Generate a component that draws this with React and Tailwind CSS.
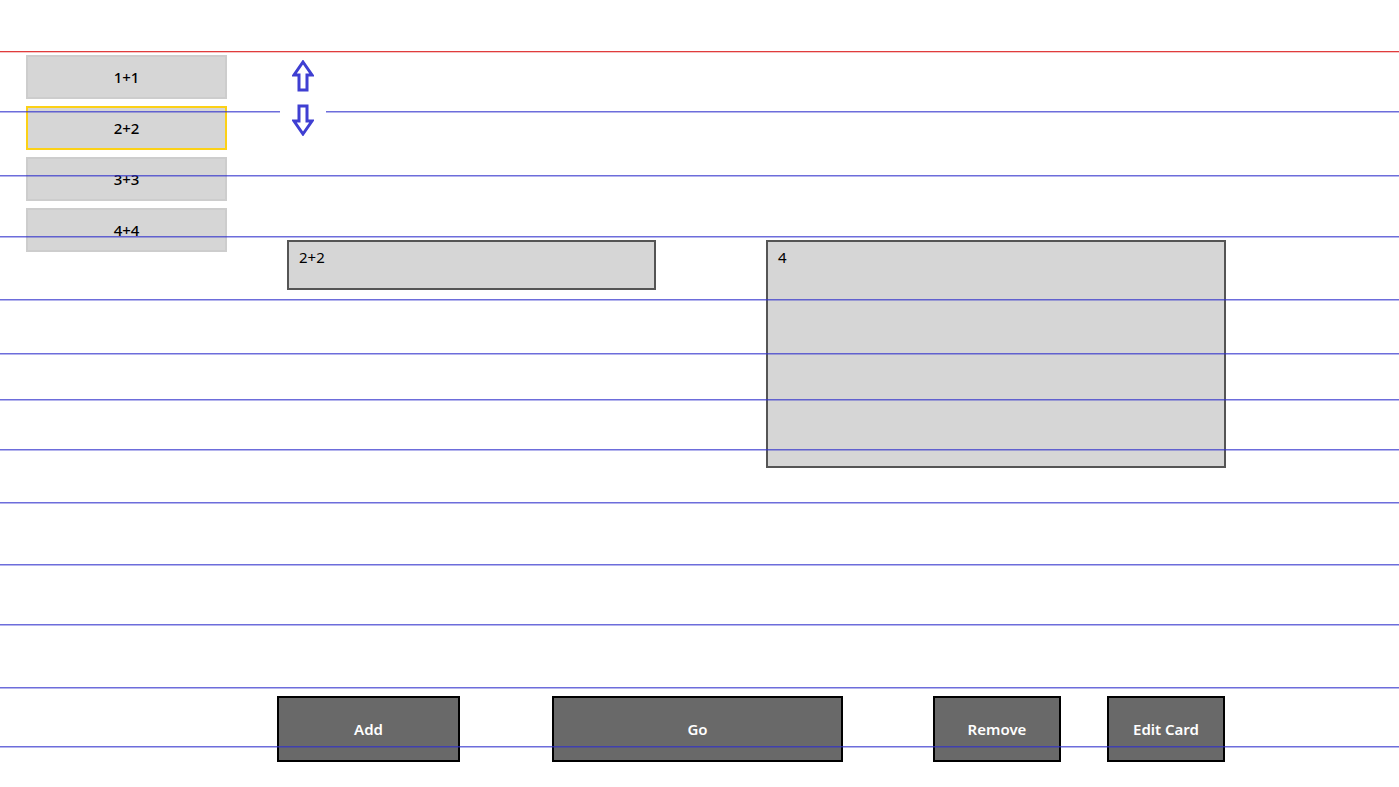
import { useState } from 'react'

const cards = ['1+1', '2+2', '3+3', '4+4']
const answers = { '1+1': '2', '2+2': '4', '3+3': '6', '4+4': '8' }
const ruleLines = [111, 175, 236, 299, 353, 399, 449, 502, 564, 624, 687, 746]

const ArrowUp = () => (
  <svg width="22" height="32" viewBox="0 0 22 32" fill="none">
    <path d="M11 2 L20 15 L15 15 L15 30 L7 30 L7 15 L2 15 Z" stroke="#3f3fd2" strokeWidth="3" strokeLinejoin="miter" />
  </svg>
)

const ArrowDown = () => (
  <svg width="22" height="32" viewBox="0 0 22 32" fill="none">
    <path d="M11 30 L20 17 L15 17 L15 2 L7 2 L7 17 L2 17 Z" stroke="#3f3fd2" strokeWidth="3" strokeLinejoin="miter" />
  </svg>
)

const App = () => {
  const [selected, setSelected] = useState(1)
  const current = cards[selected]

  return (
    <div className="relative w-full h-[787px] bg-white overflow-hidden flex flex-col font-['Noto_Sans','Open_Sans',sans-serif] text-black">
      {/* Top area: card list, arrows, question/answer */}
      <div className="flex pt-[55px]">
        <div className="ml-[26px] w-[201px] flex flex-col gap-[7px]">
          {cards.map((c, i) => (
            <button
              key={c}
              onClick={() => setSelected(i)}
              className={`h-[44px] w-full bg-[#d6d6d6] border-2 text-[15px] font-medium ${i === selected ? 'border-[#fcd116]' : 'border-[#cdcdcd]'}`}
            >
              {c}
            </button>
          ))}
        </div>

        <div className="ml-[53px] flex flex-col">
          <div className="relative z-20 w-[46px] h-[85px] bg-white flex flex-col items-center pt-[5px] gap-[12px]">
            <button onClick={() => setSelected(Math.max(0, selected - 1))}>
              <ArrowUp />
            </button>
            <button onClick={() => setSelected(Math.min(cards.length - 1, selected + 1))}>
              <ArrowDown />
            </button>
          </div>

          <div className="flex items-start mt-[100px] ml-[7px]">
            <div className="w-[369px] h-[50px] bg-[#d6d6d6] border-2 border-[#555555] pl-[10px] pt-[5px] text-[15px] leading-[20px]">
              {current}
            </div>
            <div className="ml-[110px] w-[460px] h-[228px] bg-[#d6d6d6] border-2 border-[#555555] pl-[10px] pt-[5px] text-[15px] leading-[20px]">
              {answers[current]}
            </div>
          </div>
        </div>
      </div>

      {/* Bottom buttons */}
      <div className="mt-auto mb-[25px] flex items-center pl-[277px]">
        <button className="w-[183px] h-[66px] bg-[#696969] border-2 border-black text-white text-[15px] font-semibold pt-[1px]">Add</button>
        <button className="ml-[92px] w-[291px] h-[66px] bg-[#696969] border-2 border-black text-white text-[15px] font-semibold pt-[1px]">Go</button>
        <button className="ml-[90px] w-[128px] h-[66px] bg-[#696969] border-2 border-black text-white text-[15px] font-semibold pt-[1px]">Remove</button>
        <button className="ml-[46px] w-[118px] h-[66px] bg-[#696969] border-2 border-black text-white text-[15px] font-semibold pt-[1px]">Edit Card</button>
      </div>

      {/* Ruled paper lines drawn over the page */}
      <svg className="absolute inset-0 z-10 pointer-events-none" width="100%" height="787">
        <rect x="0" y="51" width="100%" height="1.3" fill="#e03c3c" />
        {ruleLines.map((y) => (
          <rect key={y} x="0" y={y} width="100%" height="1.5" fill="#2f2fcc" fillOpacity="0.7" />
        ))}
      </svg>
    </div>
  )
}

export default App
